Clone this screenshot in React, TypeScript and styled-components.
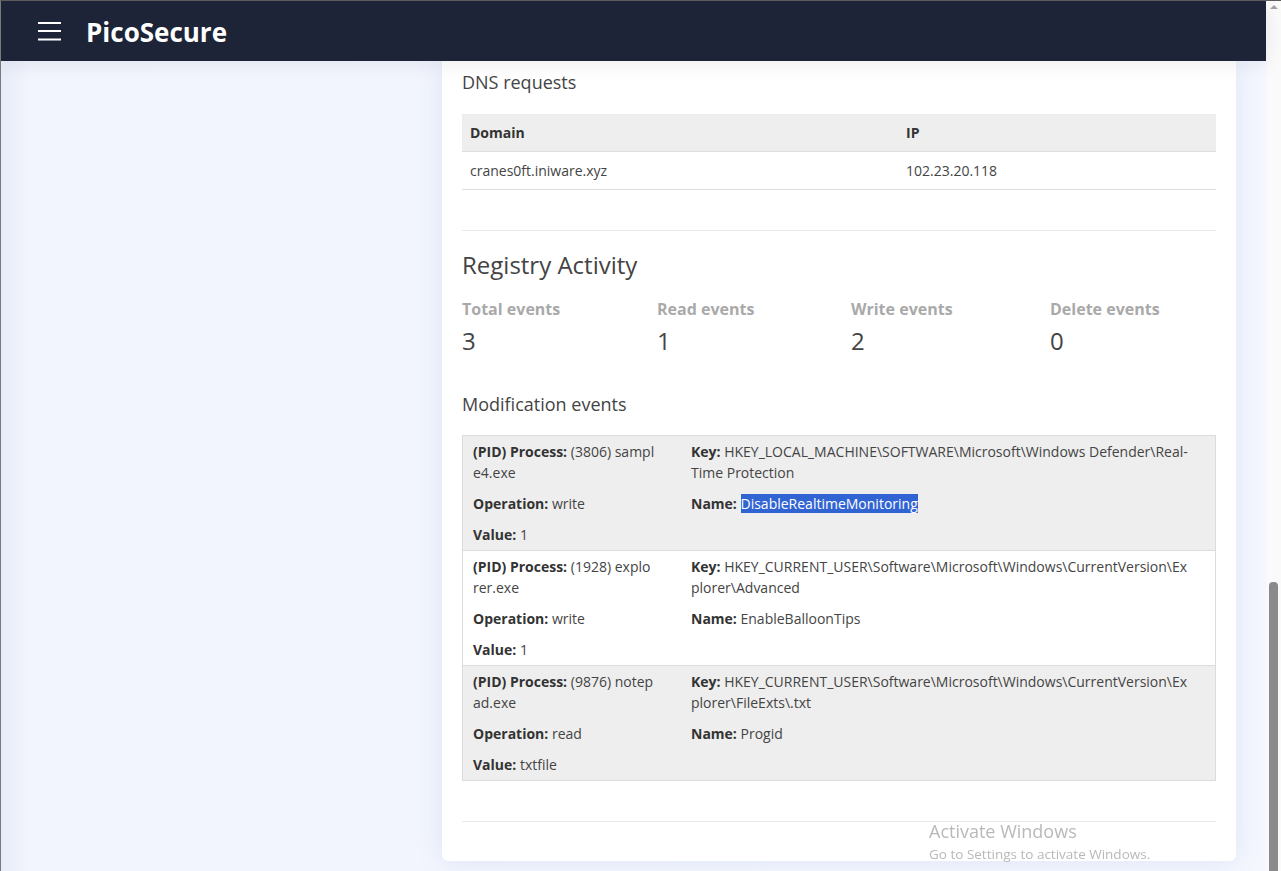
import React from "react";
import styled, { createGlobalStyle } from "styled-components";

const GlobalStyle = createGlobalStyle`
  html, body { margin: 0; padding: 0; overflow: hidden; }
  body {
    font-family: "Open Sans", "Noto Sans", Arial, sans-serif;
    color: #444;
    background: #f3f6fd;
  }
  * { box-sizing: border-box; }
`;

const Frame = styled.div`
  width: 1281px;
  height: 871px;
  display: flex;
  border-top: 1px solid #5c5c5c;
  border-left: 1px solid #7a7a7a;
  overflow: hidden;
`;

const Main = styled.div`
  flex: 1;
  display: flex;
  flex-direction: column;
  min-width: 0;
`;

const Header = styled.header`
  position: relative;
  z-index: 2;
  height: 60px;
  flex: none;
  background: #1d2438;
  display: flex;
  align-items: center;
  padding-left: 37px;
  gap: 25px;
  box-shadow: 0 3px 18px rgba(20, 30, 60, 0.08);
`;

const Brand = styled.div`
  color: #fff;
  font-size: 26px;
  font-weight: 700;
  line-height: 1;
  padding-top: 1px;
`;

const Body = styled.div`
  flex: 1;
  display: flex;
  align-items: flex-start;
  padding-left: 441px;
  background: linear-gradient(90deg, #e7ecf8 0px, #f2f5fd 28px, #f4f7fe 100%);
`;

const Card = styled.main`
  width: 794px;
  background: #fff;
  border-radius: 0 0 6px 6px;
  box-shadow: 0 0 28px rgba(90, 120, 200, 0.14);
  padding: 10px 20px 39px;
  display: flex;
  flex-direction: column;
`;

const SectionTitle = styled.h3`
  margin: ${(p: { $top?: number }) => p.$top ?? 0}px 0 0;
  font-size: 18px;
  line-height: 22px;
  font-weight: 400;
  color: #444;
`;

const BigTitle = styled.h2`
  margin: 19px 0 0;
  font-size: 24px;
  line-height: 30px;
  font-weight: 400;
  color: #444;
`;

const Divider = styled.hr`
  border: none;
  border-top: 1px solid #eaeaea;
  margin: 40px 0 0;
  height: 0;
`;

const DnsTable = styled.div`
  margin-top: 21px;
  display: flex;
  flex-direction: column;
  font-size: 14px;
`;

const DnsRow = styled.div<{ $head?: boolean }>`
  display: grid;
  grid-template-columns: 436px 1fr;
  height: 38px;
  align-items: center;
  padding: 0 8px;
  border-bottom: 1px solid #dedede;
  background: ${(p) => (p.$head ? "#eee" : "#fff")};
  font-weight: ${(p) => (p.$head ? 700 : 400)};
  color: ${(p) => (p.$head ? "#333" : "#444")};
`;

const Stats = styled.div`
  margin-top: 18px;
  display: grid;
  grid-template-columns: 195px 194px 199px 1fr;
`;

const Stat = styled.div`
  display: flex;
  flex-direction: column;
  gap: 6px;
`;

const StatLabel = styled.div`
  font-size: 16px;
  line-height: 22px;
  font-weight: 700;
  color: #a9a9a9;
`;

const StatValue = styled.div`
  font-size: 24px;
  line-height: 30px;
  color: #444;
`;

const EventsTable = styled.div`
  margin-top: 20px;
  border: 1px solid #dcdcdc;
  display: flex;
  flex-direction: column;
`;

const EventRow = styled.div<{ $shade: boolean }>`
  display: grid;
  grid-template-columns: 181.5px 501px;
  column-gap: 36.5px;
  row-gap: 10px;
  align-content: start;
  height: 114px;
  padding: 5px 10px;
  background: ${(p) => (p.$shade ? "#eeeeee" : "#fff")};
  & + & {
    border-top: 1px solid #dcdcdc;
    height: 115px;
  }
  font-size: 14px;
  line-height: 21px;
  color: #444;
`;

const Field = styled.div`
  word-break: break-all;
  b {
    font-weight: 700;
    color: #333;
  }
`;

const Selected = styled.span`
  background: #3164d3;
  color: #fff;
`;

const Scrollbar = styled.div`
  width: 15px;
  flex: none;
  background: #fafafa;
  display: flex;
  flex-direction: column;
  align-items: center;
`;

const ArrowUp = styled.div`
  margin-top: 4px;
  width: 0;
  height: 0;
  border-left: 4px solid transparent;
  border-right: 4px solid transparent;
  border-bottom: 4px solid #a3a3a3;
`;

const Thumb = styled.div`
  margin-top: auto;
  width: 9px;
  height: 289px;
  background: #8a8a8a;
  border-radius: 4px 4px 0 0;
`;

const Watermark = styled.div`
  position: fixed;
  left: 929px;
  top: 819px;
  color: #b9b9b9;
  pointer-events: none;
`;

const WatermarkTitle = styled.div`
  font-size: 18px;
  line-height: 24px;
`;

const WatermarkSub = styled.div`
  font-size: 13.5px;
  line-height: 20px;
  margin-top: 1px;
`;

const MenuIcon = () => (
  <svg width="23" height="20" viewBox="0 0 23 20" aria-hidden>
    <rect x="0" y="1" width="23" height="2" fill="#fff" />
    <rect x="0" y="9" width="23" height="2" fill="#fff" />
    <rect x="0" y="17.5" width="23" height="2" fill="#fff" />
  </svg>
);

type Ev = {
  pid: string;
  proc: string;
  op: string;
  value: string;
  key: string;
  name: string;
  selected?: boolean;
};

const events: Ev[] = [
  {
    pid: "3806",
    proc: "sample4.exe",
    op: "write",
    value: "1",
    key: "HKEY_LOCAL_MACHINE\\SOFTWARE\\Microsoft\\Windows Defender\\Real-Time Protection",
    name: "DisableRealtimeMonitoring",
    selected: true,
  },
  {
    pid: "1928",
    proc: "explorer.exe",
    op: "write",
    value: "1",
    key: "HKEY_CURRENT_USER\\Software\\Microsoft\\Windows\\CurrentVersion\\Explorer\\Advanced",
    name: "EnableBalloonTips",
  },
  {
    pid: "9876",
    proc: "notepad.exe",
    op: "read",
    value: "txtfile",
    key: "HKEY_CURRENT_USER\\Software\\Microsoft\\Windows\\CurrentVersion\\Explorer\\FileExts\\.txt",
    name: "Progid",
  },
];

const stats = [
  { label: "Total events", value: 3 },
  { label: "Read events", value: 1 },
  { label: "Write events", value: 2 },
  { label: "Delete events", value: 0 },
];

export default function App() {
  return (
    <>
      <GlobalStyle />
      <Frame>
        <Main>
          <Header>
            <MenuIcon />
            <Brand>PicoSecure</Brand>
          </Header>
          <Body>
            <Card>
              <SectionTitle>DNS requests</SectionTitle>
              <DnsTable>
                <DnsRow $head>
                  <span>Domain</span>
                  <span>IP</span>
                </DnsRow>
                <DnsRow>
                  <span>cranes0ft.iniware.xyz</span>
                  <span>102.23.20.118</span>
                </DnsRow>
              </DnsTable>
              <Divider />
              <BigTitle>Registry Activity</BigTitle>
              <Stats>
                {stats.map((s) => (
                  <Stat key={s.label}>
                    <StatLabel>{s.label}</StatLabel>
                    <StatValue>{s.value}</StatValue>
                  </Stat>
                ))}
              </Stats>
              <SectionTitle $top={37}>Modification events</SectionTitle>
              <EventsTable>
                {events.map((e, i) => (
                  <EventRow key={e.pid} $shade={i % 2 === 0}>
                    <Field>
                      <b>(PID) Process:</b> ({e.pid}) {e.proc}
                    </Field>
                    <Field>
                      <b>Key:</b> {e.key}
                    </Field>
                    <Field>
                      <b>Operation:</b> {e.op}
                    </Field>
                    <Field>
                      <b>Name:</b>{" "}
                      {e.selected ? <Selected>{e.name}</Selected> : e.name}
                    </Field>
                    <Field>
                      <b>Value:</b> {e.value}
                    </Field>
                  </EventRow>
                ))}
              </EventsTable>
              <Divider />
            </Card>
          </Body>
        </Main>
        <Scrollbar>
          <ArrowUp />
          <Thumb />
        </Scrollbar>
      </Frame>
      <Watermark>
        <WatermarkTitle>Activate Windows</WatermarkTitle>
        <WatermarkSub>Go to Settings to activate Windows.</WatermarkSub>
      </Watermark>
    </>
  );
}
